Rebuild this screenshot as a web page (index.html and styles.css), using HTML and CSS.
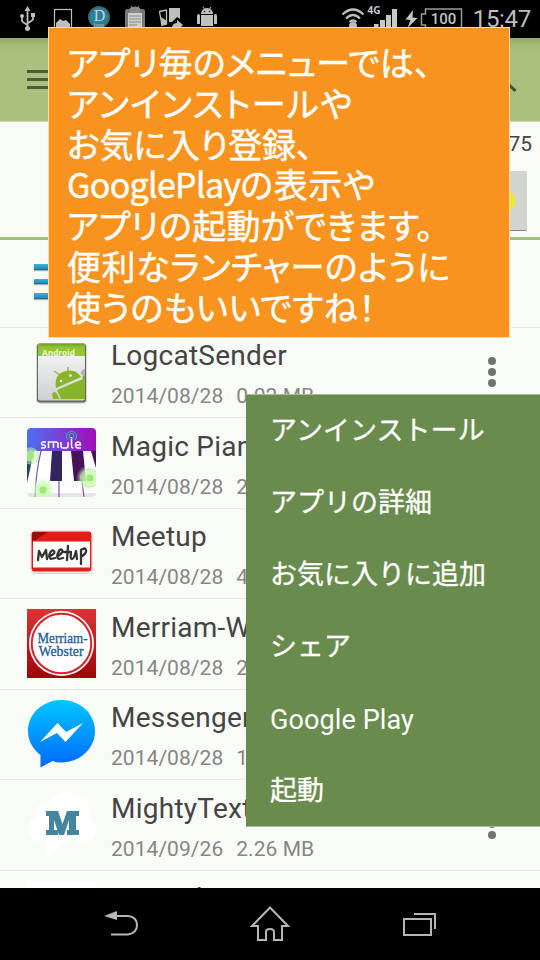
FILE: index.html
```html
<!DOCTYPE html>
<html lang="ja">
<head>
<meta charset="utf-8">
<title>アプリ一覧</title>
<link rel="stylesheet" href="styles.css">
</head>
<body>
<div class="screen">
  <header class="status">
    <svg class="status-left" width="240" height="38" viewBox="0 0 240 38">
      <g stroke="#bebebe" stroke-width="1.8" fill="none">
        <path d="M27.5 10v18M22 17v3.500q0 1.500 1.500 2l4 2.500M33 16v3q0 1-1.500 1.800l-4 2.700"/>
        <rect x="54.500" y="9.500" width="17" height="20" stroke-width="1.200"/>
      </g>
      <g fill="#bebebe">
        <path d="M27.500 6l3 5h-6z"/><circle cx="27.500" cy="28.500" r="2.500"/><circle cx="22" cy="16" r="2"/><path d="M31 13h4v4h-4z"/>
        <path d="M56 23l4-4 3 2 3-1 4 4v4H56z"/>
      </g>
      <circle cx="99" cy="17" r="10.800" fill="#2b7f95"/>
      <circle cx="99" cy="17" r="10.200" fill="none" stroke="#4b5c61" stroke-width="1.200"/>
      <text x="99.500" y="21" class="d-letter">D</text>
      <text x="99" y="27" class="d-sub">free</text>
      <rect x="125" y="9" width="20" height="22" rx="2" fill="#777"/>
      <rect x="128" y="13" width="14" height="18" fill="#d0d0d0"/>
      <path d="M130 8q5-3 10 0l1 5h-12z" fill="#8a8a8a"/><path d="M131 6l2 3M139 6l-2 3" stroke="#999"/>
      <path d="M129 16h12M129 19h12M129 22h12M129 25h8" stroke="#888"/>
      <path d="M159.500 11.500l7-1.500v14l-4.500 1.500z" fill="none" stroke="#bebebe" stroke-width="1.300"/>
      <path d="M161 17l6 4v3l-5 1zM169 8h11v11l-3-2-5 5h-3zM172 27q1-4 5-4v-3l6 5-5 5v-3z" fill="#bebebe"/>
      <g fill="#c0c0c0">
        <path d="M201 14a6 6 0 0 1 12 0zM201 15h12v11h-12zM197 16q0-2 1.500-2t1.500 2v8h-3zM214 16q0-2 1.500-2t1.500 2v8h-3z"/>
        <path d="M203 7l2 3M211 7l-2 3" stroke="#c0c0c0"/>
      </g>
      <g fill="#222"><circle cx="204.500" cy="11.500" r=".8"/><circle cx="209.500" cy="11.500" r=".8"/></g>
    </svg>
    <div class="status-right">
      <svg width="24" height="38" viewBox="340 0 24 38"><g fill="none" stroke="#bebebe" stroke-width="2.300"><path d="M341.500 14.500q10.500-10 21 0M345 18.500q7-7 14 0M348.500 22q3.500-3 7 0"/></g><circle cx="352" cy="26" r="4" fill="#bebebe"/></svg>
      <svg width="34" height="38" viewBox="364 0 34 38"><text x="366.500" y="14" class="net">4G</text><path d="M373 24h4.500v4H373zM379 20h5v8h-5zM385 15h5v13h-5zM391 9h5v19h-5z" fill="#c8c8c8"/></svg>
      <svg width="64" height="38" viewBox="398 0 64 38"><path d="M412 10l-7.500 9.500 5 .5-3 8 10-10-5-.5z" fill="#c4c4c4"/><path d="M424.500 30V25h-4V14h4V9H460.500V30" fill="none" stroke="#9a9a9a" stroke-width="1.500"/><text x="442.500" y="24.300" class="battery">100</text></svg>
      <span class="clock">15:47</span>
    </div>
  </header>
  <div class="appbar">
    <div class="burger"><i></i><i></i><i></i></div>
    <svg class="search" width="26" height="28" viewBox="0 0 26 28"><circle cx="9" cy="10" r="7" fill="none" stroke="#465033" stroke-width="3"/><path d="M14 16l9.500 9" stroke="#465033" stroke-width="3"/></svg>
  </div>
  <section class="summary">
    <span class="count">75</span>
    <div class="sort"><span></span></div>
  </section>
  <main class="list">
    <div class="row first"><div class="icon menu-icon"><i></i><i></i><i></i></div></div>
    <div class="row">
      <svg class="icon" viewBox="0 0 69 69">
        <defs><linearGradient id="paper" x2="0" y2="1"><stop stop-color="#fafafa"/><stop offset="1" stop-color="#cfcfcf"/></linearGradient>
        <linearGradient id="leaf" x2="0" y2="1"><stop stop-color="#6f9f22"/><stop offset=".25" stop-color="#8fc42f"/><stop offset="1" stop-color="#96c935"/></linearGradient>
        <clipPath id="pad"><rect x="11" y="5" width="47" height="56"/></clipPath></defs>
        <rect x="9" y="5" width="51" height="61" rx="4" fill="#000" opacity=".12"/><rect x="10" y="5.500" width="49" height="59" rx="3" fill="#666"/>
        <rect x="11" y="6" width="47" height="56.500" rx="2" fill="url(#paper)"/>
        <path d="M11 18V8q0-2 2-2h43q2 0 2 2v10z" fill="url(#leaf)"/>
        <text x="15" y="18" class="android" textLength="33" lengthAdjust="spacingAndGlyphs">Android</text>
        <path d="M58 31a4 4 0 0 0-4 5l4 4z" fill="#b5b5b5"/>
        <g clip-path="url(#pad)" fill="#86b52c"><path d="M29 50C27 40 32 34 39 33C46 31 52 35 54 39zM30 52l26-11 8 22H35zM25 56q2-4 5 0l4 8h-7zM55 39q3-3 5 0v12z"/><path d="M33 37l-6-4M41 34v-5" stroke="#86b52c" stroke-width="1.300"/></g>
        <circle cx="34" cy="43" r="1.300" fill="#fff"/><circle cx="43.500" cy="37.500" r="1.300" fill="#fff"/>
      </svg>
      <div class="info"><div class="name">LogcatSender</div><div class="meta"><span>2014/08/28</span><span>0.02 MB</span></div></div>
      <div class="more"><i></i><i></i><i></i></div>
    </div>
    <div class="row">
      <svg class="icon" viewBox="0 0 69 69">
        <defs><linearGradient id="violet"><stop stop-color="#506ff0"/><stop offset=".5" stop-color="#7a3ed5"/><stop offset="1" stop-color="#a10eb6"/></linearGradient><clipPath id="tile"><rect width="69" height="69" rx="4"/></clipPath>
        <radialGradient id="glow"><stop stop-color="#baf79c"/><stop offset=".55" stop-color="#cff8ba" stop-opacity=".8"/><stop offset="1" stop-color="#e8fddc" stop-opacity="0"/></radialGradient></defs>
        <g clip-path="url(#tile)"><rect width="69" height="69" fill="#fff"/><rect y="65" width="69" height="4" fill="#e4e4ea"/><rect width="69" height="23" fill="url(#violet)"/>
          <path d="M0 23h7L0 55z" fill="#27415b"/><path d="M25 23h10v30H23z" fill="#30255e"/><path d="M44 23h12l3 30H47z" fill="#451359"/><path d="M64 23h5v17z" fill="#451359"/>
          <path d="M14 23q-5 20-6 46M32 53v16M55 53l2 16" fill="none" stroke="#7b55b4" stroke-width="1.200"/>
          <circle cx="4" cy="28" r="9" fill="url(#glow)"/><circle cx="16" cy="62" r="13" fill="url(#glow)"/><circle cx="62" cy="50" r="13" fill="url(#glow)"/>
          <g fill="#9bea78"><circle cx="3.500" cy="28" r="3.200"/><circle cx="16" cy="62" r="3.500"/><circle cx="63" cy="50" r="3.300"/></g><g fill="none" stroke="#a5eb88" stroke-width=".7"><circle cx="3.500" cy="28" r="8"/><circle cx="62.500" cy="50" r="9"/></g>
        </g>
        <g fill="none" stroke="#fff" stroke-width="1.500"><path d="M19 14h-3.500q-2 1.500 0 3h2q2 1.500 0 3H14M21.500 20v-6h7.500q2 0 2 2v4M26.500 14v6M34 14v4q0 2 2 2h3q2 0 2-2v-4M44.500 9v9q0 2 2 2M48 17h5.500q0-3-2.500-3t-2.500 3 2.500 3h3"/></g>
        <g fill="none" stroke="#20c89a"><circle cx="44.500" cy="8" r="2.500"/><path d="M41 12a5 5 0 1 1 7 0"/></g>
      </svg>
      <div class="info"><div class="name">Magic Piano</div><div class="meta"><span>2014/08/28</span><span>2 MB</span></div></div>
      <div class="more"><i></i><i></i><i></i></div>
    </div>
    <div class="row">
      <svg class="icon" viewBox="0 0 69 69">
        <rect x="3" y="11" width="63" height="44" rx="5" fill="#bbb" opacity=".6"/><rect x="3.500" y="11.500" width="62" height="42" rx="4" fill="#fff"/><rect x="4.500" y="12.500" width="60" height="40" rx="3" fill="#e31b19"/><path d="M5 23V15q0-2 2-2h14z" fill="#980f0e"/><rect x="6" y="22.500" width="57" height="26" fill="#fff"/>
        <g fill="none" stroke="#333" stroke-width="2.300" stroke-linecap="round" stroke-linejoin="round"><path d="M11 41l1-9 3 6 4-7 1 9M23 37q6-3 4-5t-4 2 1 6l4-1M31 37q6-4 4-6t-4 3 1 6l4-1M41 27l-1 14M37 33h7M44 34q-1 6 1 6t4-8l1 8M54 45V31q4-3 5 0t-5 7"/></g>
      </svg>
      <div class="info"><div class="name">Meetup</div><div class="meta"><span>2014/08/28</span><span>4 MB</span></div></div>
      <div class="more"><i></i><i></i><i></i></div>
    </div>
    <div class="row">
      <svg class="icon" viewBox="0 0 69 69">
        <defs><linearGradient id="red" x2="0" y2="1"><stop stop-color="#dc3434"/><stop offset="1" stop-color="#9d0608"/></linearGradient></defs>
        <rect width="69" height="69" fill="url(#red)"/><circle cx="34.500" cy="34.500" r="32.500" fill="#fff"/><circle cx="34.500" cy="34.500" r="29.800" fill="none" stroke="#dc1f2b" stroke-width="2"/>
        <text x="10.500" y="33.500" class="mw" textLength="50" lengthAdjust="spacingAndGlyphs">Merriam-</text><text x="11.500" y="47" class="mw" textLength="45" lengthAdjust="spacingAndGlyphs">Webster</text>
      </svg>
      <div class="info"><div class="name">Merriam-Webster</div><div class="meta"><span>2014/08/28</span><span>2 MB</span></div></div>
      <div class="more"><i></i><i></i><i></i></div>
    </div>
    <div class="row">
      <svg class="icon" viewBox="0 0 69 69">
        <defs><linearGradient id="blue" x2="0" y2="1"><stop stop-color="#00c6ff"/><stop offset="1" stop-color="#0068ff"/></linearGradient></defs>
        <path d="M34.500 0C16 0 1 13.500 1 31c0 9.500 4.500 18 12.500 24V67.500l12-6.500q4 1.500 9 1.500C53 62.500 68 48.500 68 31S53 0 34.500 0z" fill="url(#blue)"/><path d="M13 42l17.500-19 8.500 9 17-9-17.500 19-8.500-9z" fill="#fff"/>
      </svg>
      <div class="info"><div class="name">Messenger</div><div class="meta"><span>2014/08/28</span><span>1 MB</span></div></div>
      <div class="more"><i></i><i></i><i></i></div>
    </div>
    <div class="row">
      <svg class="icon" viewBox="0 0 69 69">
        <path d="M10 51Q0 48 .5 39Q1 31 9 28Q7 14 20 13Q28 2 42 2Q61 3 63 21Q64 25 62 29Q70 33 69 41Q67 51 57 52H37L24 66q-5 3-5-3V52z" fill="#fff"/>
        <path d="M19 21h12l4.500 13L40 21h12v5h-3v14h3v5H40v-5h2V30l-5 15h-5l-5-15v10h4v5H19v-5h3V26h-3z" fill="#4486a0"/>
      </svg>
      <div class="info"><div class="name">MightyText</div><div class="meta"><span>2014/09/26</span><span>2.26 MB</span></div></div>
      <div class="more"><i></i><i></i><i></i></div>
    </div>
    <div class="row">
      <svg class="icon" viewBox="0 0 69 69"><rect width="69" height="69" rx="4" fill="#fff"/></svg>
      <div class="info"><div class="name">Moneybox</div></div>
    </div>
  </main>
  <nav class="navbar">
    <svg width="34" height="26" viewBox="0 0 34 26"><path d="M0 5l13-5v9z" fill="#b8b8b8"/><path d="M12 5h12q9 1 9 9t-9 9.500H7" fill="none" stroke="#b5b5b5" stroke-width="2"/></svg>
    <svg width="40" height="36" viewBox="0 0 40 36"><path d="M20 1.500L2 20h6v14h8v-8q0-3 4-3t4 3v8h8V20h6z" fill="none" stroke="#b5b5b5" stroke-width="2"/></svg>
    <svg width="36" height="25" viewBox="0 0 36 25"><path d="M2 7h27v16H2zM12 2h21v15" fill="none" stroke="#b5b5b5" stroke-width="2"/></svg>
  </nav>
  <div class="note">
    <p class="l1">アプリ毎のメニューでは、</p>
    <p class="l2">アンインストールや</p>
    <p class="l3">お気に入り登録、</p>
    <p class="l4"><span>GooglePlay</span>の表示や</p>
    <p class="l5">アプリの起動ができます。</p>
    <p class="l6">便利なランチャーのように</p>
    <p class="l7">使うのもいいですね！</p>
  </div>
  <ul class="popup">
    <li>アンインストール</li><li>アプリの詳細</li><li>お気に入りに追加</li><li>シェア</li><li class="latin">Google Play</li><li>起動</li>
  </ul>
</div>
</body>
</html>
```
FILE: styles.css
```css
* { box-sizing: border-box; margin: 0; padding: 0; }
body { background: #000; font-family: Roboto, "Noto Sans CJK JP", sans-serif; }
.screen { position: relative; width: 540px; height: 960px; overflow: hidden; display: flex; flex-direction: column; background: #f9fbf7; }
svg { display: block; flex: none; }

.status { height: 38px; flex: none; background: #000; display: flex; justify-content: space-between; }
.status-right { display: flex; padding-right: 9px; }
.clock { color: #bebebe; font-size: 24px; line-height: 38px; margin-left: 10px; letter-spacing: -.3px; }
.d-letter { font: 16px "Liberation Serif", serif; fill: #c5d5d8; text-anchor: middle; }
.d-sub { font: 7px "Liberation Serif", serif; fill: #a3c2ca; text-anchor: middle; }
.net { font: bold 10px "Open Sans", sans-serif; fill: #c8c8c8; }
.battery { font: 500 15px Roboto, sans-serif; fill: #c4c4c4; text-anchor: middle; }
.android { font: bold 9px "Open Sans", sans-serif; fill: #eef8d0; }
.mw { font: 14px "Liberation Serif", serif; fill: #1c5a9c; stroke: #1c5a9c; stroke-width: .3px; }

.appbar { height: 84px; flex: none; padding: 0 22px 0 27px; display: flex; align-items: center; justify-content: space-between; background: linear-gradient(#93a969, #a3ba75 6px, #abc07e 14px); border-bottom: 1px solid #cbd9ac; }
.burger { display: flex; flex-direction: column; gap: 5px; width: 32px; }
.burger i { height: 3px; background: #4e5a3a; }

.summary { height: 118px; flex: none; padding: 10px 8px 0 0; border-bottom: 3px solid #a9bf7c; display: flex; flex-direction: column; align-items: flex-end; }
.count { font-size: 21px; line-height: 25px; color: #444; }
.sort { width: 68px; height: 60px; margin: 14px 5px 0 0; border-radius: 2px; background: #d2d4d0; border-bottom: 1px solid #858585; display: flex; align-items: center; justify-content: center; }
.sort span { width: 44px; height: 30px; border-radius: 50%; background: #e8ee20; }

.list { flex: 1; min-height: 0; overflow: hidden; }
.row { height: 90.5px; padding: 0 27px; border-bottom: 1.5px solid #e5e7e4; display: flex; align-items: flex-start; }
.row.first { height: 87.5px; }
.icon { width: 69px; height: 69px; margin-top: 10px; }
.menu-icon { margin: 24px 0 0 7px; display: flex; flex-direction: column; gap: 9px; }
.menu-icon i { height: 5.5px; width: 54px; background: linear-gradient(#36b2e4, #2490ba 75%, #245f78); box-shadow: 0 1px 1px #aaa; }
.info { flex: 1; margin-left: 15px; white-space: nowrap; }
.name { margin-top: 11.5px; font-size: 28px; line-height: 34px; color: #444; letter-spacing: .25px; }
.meta { margin-top: 11px; display: flex; gap: 13px; font-size: 21px; line-height: 24px; color: #858684; letter-spacing: .05px; }
.more { width: 8px; margin: 29px 17px 0 0; display: flex; flex-direction: column; gap: 3.2px; }
.more i { width: 8px; height: 8px; border-radius: 50%; background: #737472; }

.navbar { height: 72px; flex: none; background: #000; display: flex; align-items: center; justify-content: space-between; padding: 0 102px 0 104px; }

.note { position: absolute; left: 48px; top: 27px; width: 462px; height: 311px; padding: 14px 0 0 18px; background: #f7931e; border: 1px solid #fbd9a8; color: #fff; font-family: "Noto Sans CJK JP", sans-serif; font-size: 34px; line-height: 40.8px; font-feature-settings: "palt"; -webkit-text-stroke: .45px #fff; white-space: nowrap; }
.l1 { letter-spacing: .25px; }
.l2 { letter-spacing: 1.4px; }
.l3 { letter-spacing: -.1px; }
.l4 { letter-spacing: .6px; }
.l4 span { letter-spacing: -.7px; }
.l5 { letter-spacing: .4px; }
.l6, .l7 { letter-spacing: .6px; }

.popup { position: absolute; left: 246px; top: 394px; width: 294px; height: 433px; list-style: none; background: #6a8b4e; border-top: 1px solid #a8bb98; border-bottom: 1px solid #a8bb98; color: #fff; font-family: "Noto Sans CJK JP", sans-serif; font-size: 27px; -webkit-text-stroke: .3px #fff; }
.popup li { height: 72px; line-height: 68px; padding-left: 24px; }
.popup .latin { font-family: Roboto, sans-serif; line-height: 75px; letter-spacing: .1px; -webkit-text-stroke: 0; }
```
